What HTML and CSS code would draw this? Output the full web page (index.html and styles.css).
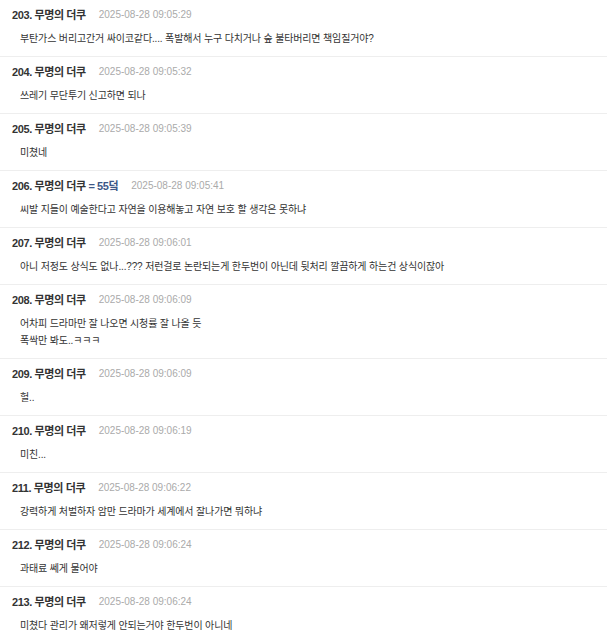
FILE: index.html
```html
<!DOCTYPE html>
<html lang="ko">
<head>
<meta charset="utf-8">
<link rel="stylesheet" href="styles.css">
</head>
<body>
<ul class="comments">
  <li class="comment">
    <div class="meta"><span class="author">203. 무명의 더쿠</span><span class="date">2025-08-28 09:05:29</span></div>
    <div class="body">부탄가스 버리고간거 싸이코같다.... 폭발해서 누구 다치거나 숲 불타버리면 책임질거야?</div>
  </li>
  <li class="comment">
    <div class="meta"><span class="author">204. 무명의 더쿠</span><span class="date">2025-08-28 09:05:32</span></div>
    <div class="body">쓰레기 무단투기 신고하면 되나</div>
  </li>
  <li class="comment">
    <div class="meta"><span class="author">205. 무명의 더쿠</span><span class="date">2025-08-28 09:05:39</span></div>
    <div class="body">미쳤네</div>
  </li>
  <li class="comment">
    <div class="meta"><span class="author">206. 무명의 더쿠 <span class="tag">= 55덬</span></span><span class="date">2025-08-28 09:05:41</span></div>
    <div class="body">씨발 지들이 예술한다고 자연을 이용해놓고 자연 보호 할 생각은 못하냐</div>
  </li>
  <li class="comment">
    <div class="meta"><span class="author">207. 무명의 더쿠</span><span class="date">2025-08-28 09:06:01</span></div>
    <div class="body">아니 저정도 상식도 없나...??? 저런걸로 논란되는게 한두번이 아닌데 뒷처리 깔끔하게 하는건 상식이잖아</div>
  </li>
  <li class="comment">
    <div class="meta"><span class="author">208. 무명의 더쿠</span><span class="date">2025-08-28 09:06:09</span></div>
    <div class="body">어차피 드라마만 잘 나오면 시청률 잘 나올 듯<br>폭싹만 봐도..ㅋㅋㅋ</div>
  </li>
  <li class="comment">
    <div class="meta"><span class="author">209. 무명의 더쿠</span><span class="date">2025-08-28 09:06:09</span></div>
    <div class="body">헐..</div>
  </li>
  <li class="comment">
    <div class="meta"><span class="author">210. 무명의 더쿠</span><span class="date">2025-08-28 09:06:19</span></div>
    <div class="body">미친...</div>
  </li>
  <li class="comment">
    <div class="meta"><span class="author">211. 무명의 더쿠</span><span class="date">2025-08-28 09:06:22</span></div>
    <div class="body">강력하게 처벌하자 암만 드라마가 세계에서 잘나가면 뭐하냐</div>
  </li>
  <li class="comment">
    <div class="meta"><span class="author">212. 무명의 더쿠</span><span class="date">2025-08-28 09:06:24</span></div>
    <div class="body">과태료 쎄게 물어야</div>
  </li>
  <li class="comment">
    <div class="meta"><span class="author">213. 무명의 더쿠</span><span class="date">2025-08-28 09:06:24</span></div>
    <div class="body">미쳤다 관리가 왜저렇게 안되는거야 한두번이 아니네</div>
  </li>
</ul>
</body>
</html>
```
FILE: styles.css
```css
html, body {
  margin: 0;
  padding: 0;
  background: #fff;
}
body {
  font-family: "Liberation Sans", "Noto Sans CJK KR", sans-serif;
  color: #333;
}
.comments {
  list-style: none;
  margin: 0;
  padding: 0;
}
.comment {
  padding: 7px 0 9px 12px;
  border-bottom: 1px solid #eeeeee;
}
.meta {
  display: flex;
  align-items: center;
  gap: 13px;
  height: 16px;
  line-height: 16px;
}
.author {
  font-size: 11px;
  font-weight: bold;
  letter-spacing: -0.4px;
  color: #333;
}
.tag {
  color: #3d5787;
}
.date {
  font-size: 10px;
  color: #aaa;
}
.body {
  margin-top: 7px;
  padding-left: 8px;
  font-size: 10px;
  letter-spacing: -0.15px;
  line-height: 17px;
  color: #333;
}
```
